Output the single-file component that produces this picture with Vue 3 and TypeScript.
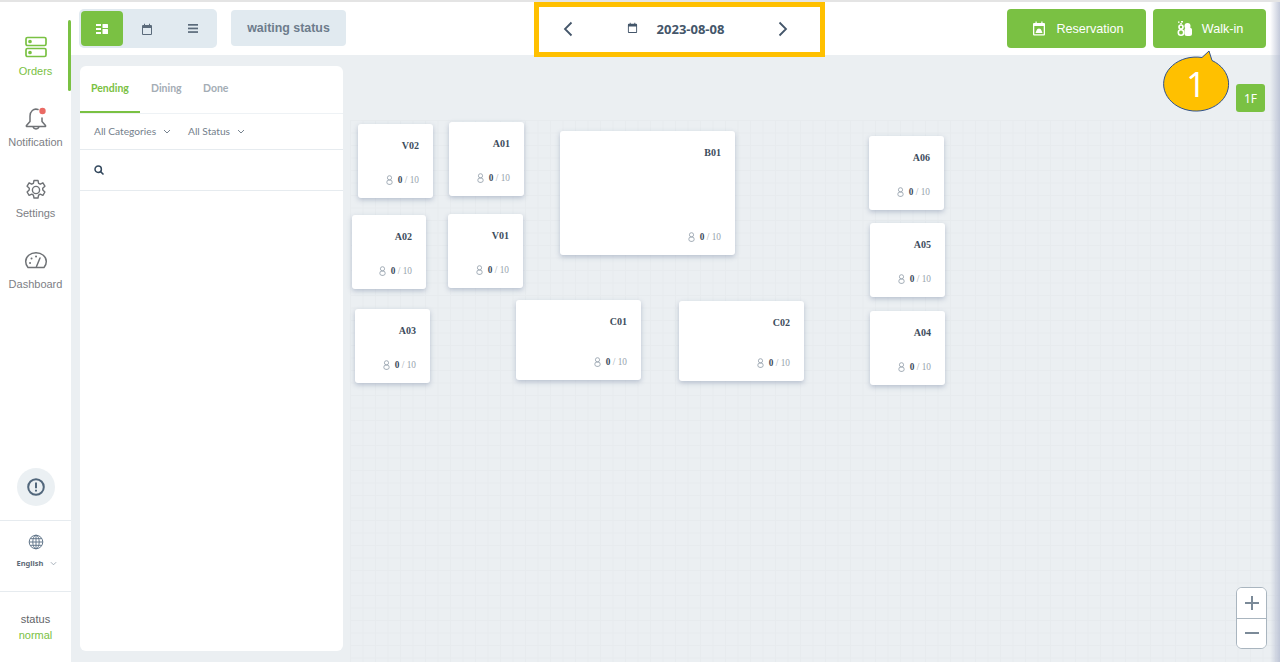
<script setup lang="ts">
interface TableItem { name: string; x: number; y: number; w: number; h: number }
const tables: TableItem[] = [
  { name: 'V02', x: 358, y: 124, w: 75, h: 74 },
  { name: 'A01', x: 449, y: 122, w: 75, h: 74 },
  { name: 'B01', x: 560, y: 131, w: 175, h: 124 },
  { name: 'A06', x: 869, y: 136, w: 75, h: 74 },
  { name: 'A02', x: 352, y: 215, w: 74, h: 74 },
  { name: 'V01', x: 448, y: 214, w: 75, h: 74 },
  { name: 'A05', x: 870, y: 223, w: 75, h: 74 },
  { name: 'A03', x: 355, y: 309, w: 75, h: 74 },
  { name: 'C01', x: 516, y: 300, w: 125, h: 80 },
  { name: 'C02', x: 679, y: 301, w: 125, h: 80 },
  { name: 'A04', x: 870, y: 311, w: 75, h: 74 },
]
function tableBox(t: TableItem) {
  return { left: t.x + 'px', top: t.y + 'px', width: t.w + 'px', height: t.h + 'px' }
}
</script>

<template>
  <div class="page">
    <aside class="side">
      <div class="nav-item active">
        <svg width="24" height="22" viewBox="0 0 24 22" fill="none" stroke="#7ac143" stroke-width="1.7">
          <rect x="2" y="1.5" width="20" height="8" rx="1.5" />
          <rect x="2" y="12.5" width="20" height="8" rx="1.5" />
          <circle cx="6" cy="5.5" r="1" fill="#7ac143" />
          <circle cx="6" cy="16.5" r="1" fill="#7ac143" />
        </svg>
        <span>Orders</span>
        <i class="nav-bar"></i>
      </div>
      <div class="nav-item">
        <svg width="24" height="24" viewBox="0 0 24 24" fill="none" stroke="#6f7276" stroke-width="1.5" stroke-linecap="round" stroke-linejoin="round">
          <path d="M14 2.500C9.500 1 6 4.500 6 9v5.500L2.500 18.500q-.6 1 .7 1h17.600q1.200 0 .7-1L18 14.500V11" />
          <path d="M9 19.800a3.200 3.500 0 0 0 6 0" />
          <circle cx="18.500" cy="4" r="3.200" fill="#ea6a64" stroke="none" />
        </svg>
        <span>Notification</span>
      </div>
      <div class="nav-item">
        <svg width="24" height="24" viewBox="0 0 24 24" fill="none" stroke="#6f7276" stroke-width="1.400" stroke-linejoin="round">
          <circle cx="12" cy="12" r="3.600" />
          <path d="M10 2.500h4l.6 2.900 1.700.8 2.600-1.400 2 3.400-2.200 2 .1 1.800 2.100 2-2 3.400-2.700-1.200-1.600 1-.6 2.800h-4l-.6-2.800-1.600-1-2.700 1.200-2-3.400 2.100-2 .1-1.800-2.200-2 2-3.400 2.600 1.400 1.700-.8z" />
        </svg>
        <span>Settings</span>
      </div>
      <div class="nav-item">
        <svg width="24" height="24" viewBox="0 2 24 24" fill="none" stroke="#6f7276" stroke-width="1.500" stroke-linecap="round" stroke-linejoin="round">
          <path d="M4 20.500Q1.700 18 1.700 14.500a10.300 8.800 0 0 1 20.600 0q0 3.500-2.300 6z" />
          <path d="M12.500 19.500L16 11" />
          <path d="M6 16h.1M7.500 11.500h.1M12 9.500h.1" stroke-width="1.900" />
        </svg>
        <span>Dashboard</span>
      </div>

      <div class="side-bottom">
        <div class="alert-wrap">
          <div class="alert">
            <svg width="20" height="20" viewBox="0 0 20 20" fill="none" stroke="#52677c" stroke-width="2">
              <circle cx="10" cy="10" r="7.800" />
              <path d="M10 5.500v5.700M10 12.800v1.700" />
            </svg>
          </div>
        </div>
        <div class="lang">
          <svg width="16" height="16" viewBox="0 0 16 16" fill="none" stroke="#64788c" stroke-width="1">
            <circle cx="8" cy="8" r="6.800" />
            <ellipse cx="8" cy="8" rx="3.200" ry="6.800" />
            <path d="M8 1.200v13.600M1.200 8h13.600M2.200 4.700h11.600M2.200 11.300h11.600" />
          </svg>
          <div class="lang-row">
            <span>English</span>
            <svg width="7" height="5" viewBox="0 0 8 5" fill="none" stroke="#9aa5b0" stroke-width="1"><path d="M1 1l3 3 3-3" /></svg>
          </div>
        </div>
        <div class="status">
          <span>status</span>
          <span class="normal">normal</span>
        </div>
      </div>
    </aside>

    <main class="main">
      <header class="toolbar">
        <div class="toolbar-left">
          <div class="views">
            <button class="view on">
              <svg width="12" height="10" viewBox="0 0 12 10" fill="#fff">
                <rect x="0" y="0" width="5" height="2" /><rect x="0" y="4" width="5" height="2" /><rect x="0" y="8" width="5" height="2" />
                <rect x="6.500" y="0" width="5.500" height="4" rx=".5" /><rect x="6.500" y="5" width="5.500" height="5" rx=".5" />
              </svg>
            </button>
            <button class="view">
              <svg width="12" height="12" viewBox="0 0 12 12" fill="#5b6b7b">
                <path d="M1 3a1 1 0 0 1 1-1h1V.8h1V2h4V.8h1V2h1a1 1 0 0 1 1 1v8a1 1 0 0 1-1 1H2a1 1 0 0 1-1-1z M2 5v6h8V5z" fill-rule="evenodd" />
              </svg>
            </button>
            <button class="view">
              <svg width="10" height="9" viewBox="0 0 10 9" fill="#5b6b7b"><rect width="10" height="1.700" /><rect y="3.600" width="10" height="1.700" /><rect y="7.200" width="10" height="1.700" /></svg>
            </button>
          </div>
          <div class="waiting">waiting status</div>
        </div>

        <div class="date-nav">
          <svg width="10" height="16" viewBox="0 0 10 16" fill="none" stroke="#44566a" stroke-width="1.800"><path d="M8.500 1.500L2 8l6.500 6.500" /></svg>
          <div class="date">
            <svg width="11" height="11" viewBox="0 0 12 12" fill="#44566a">
              <path d="M1 3a1 1 0 0 1 1-1h1V.8h1V2h4V.8h1V2h1a1 1 0 0 1 1 1v8a1 1 0 0 1-1 1H2a1 1 0 0 1-1-1z M2 5v6h8V5z" fill-rule="evenodd" />
            </svg>
            <span>2023-08-08</span>
          </div>
          <svg width="10" height="16" viewBox="0 0 10 16" fill="none" stroke="#44566a" stroke-width="1.800"><path d="M1.500 1.500L8 8l-6.500 6.500" /></svg>
        </div>

        <div class="actions">
          <button class="action reservation">
            <svg width="14" height="15" viewBox="0 0 14 15" fill="#fff">
              <path d="M1 3a1 1 0 0 1 1-1h1.500V.5h1.200V2h4.600V.5h1.200V2H12a1 1 0 0 1 1 1v10.500a1 1 0 0 1-1 1H2a1 1 0 0 1-1-1z M2.300 5v8.200h9.400V5z" fill-rule="evenodd" />
              <path d="M3.500 12l1-2.500a2.600 2.600 0 0 1 5 0l1 2.500z" />
            </svg>
            Reservation
          </button>
          <button class="action walkin">
            <svg width="15" height="15" viewBox="0 0 15 15">
              <g fill="none" stroke="#fff" stroke-width="1.600">
                <circle cx="4" cy="6" r="2" />
                <circle cx="4" cy="11.500" r="2.700" />
              </g>
              <g fill="#fff">
                <circle cx="10.500" cy="5" r="3" />
                <rect x="7.500" y="6.500" width="7.500" height="8.500" rx="2.500" />
                <rect x="1" y="0.500" width="1.500" height="1.300" />
                <rect x="4" y="0" width="2" height="1.500" />
                <rect x="3" y="2.200" width="2" height="1" />
              </g>
            </svg>
            Walk-in
          </button>
        </div>
      </header>

      <section class="stage">
        <div class="grid"></div>
        <div class="panel">
          <div class="tabs">
            <span class="tab current">Pending</span>
            <span class="tab">Dining</span>
            <span class="tab">Done</span>
          </div>
          <div class="filters">
            <span class="filter">All Categories
              <svg width="8" height="5" viewBox="0 0 8 5" fill="none" stroke="#77838f" stroke-width="1"><path d="M1 1l3 3 3-3" /></svg>
            </span>
            <span class="filter">All Status
              <svg width="8" height="5" viewBox="0 0 8 5" fill="none" stroke="#77838f" stroke-width="1"><path d="M1 1l3 3 3-3" /></svg>
            </span>
          </div>
          <div class="search">
            <svg width="10" height="10" viewBox="0 0 10 10" fill="none" stroke="#34495e" stroke-width="1.500"><circle cx="4.200" cy="4.200" r="3.200" /><path d="M6.600 6.600L9.500 9.500" /></svg>
          </div>
        </div>

        <button class="floor">1F</button>
        <div class="zoom">
          <button class="zoom-btn">
            <svg width="16" height="16" viewBox="0 0 16 16" stroke="#7b8a98" stroke-width="2"><path d="M8 1v14M1 8h14" /></svg>
          </button>
          <button class="zoom-btn">
            <svg width="16" height="16" viewBox="0 0 16 16" stroke="#7b8a98" stroke-width="2"><path d="M1 8h14" /></svg>
          </button>
        </div>
        <div class="edge"></div>
      </section>
    </main>

    <div v-for="t in tables" :key="t.name" class="table" :style="tableBox(t)">
      <div class="table-name">{{ t.name }}</div>
      <div class="seats">
        <svg width="7" height="10" viewBox="0 0 7 10" fill="none" stroke="#9aa5b0" stroke-width=".9">
          <circle cx="3.500" cy="2.800" r="2.100" /><rect x=".8" y="5" width="5.400" height="4.400" rx="2.200" />
        </svg>
        <span><b>0</b> / 10</span>
      </div>
    </div>

    <div class="highlight"></div>
    <div class="callout">
      <svg width="70" height="64" viewBox="0 0 70 64">
        <path d="M39 8.500L46 2L49 11.500A32.500 27 0 1 1 39 8.500z" fill="#ffc000" stroke="#2f528f" stroke-width="1" />
      </svg>
      <span>1</span>
    </div>
  </div>
</template>

<style>
html, body { margin: 0; padding: 0; background: #fff; }
</style>

<style scoped>
.page {
  position: relative;
  display: flex;
  width: 1280px;
  height: 662px;
  overflow: hidden;
  box-sizing: border-box;
  border-top: 2px solid #e4e4e4;
  font-family: "Liberation Sans", Arial, sans-serif;
  background: #fff;
}
button { border: none; padding: 0; font: inherit; cursor: pointer; }

.side {
  width: 71px;
  flex: none;
  display: flex;
  flex-direction: column;
  background: #fff;
}
.nav-item {
  position: relative;
  height: 71px;
  display: flex;
  flex-direction: column;
  align-items: center;
  gap: 5px;
  font-size: 11px;
  line-height: 13px;
  color: #7d8085;
  box-sizing: border-box;
}
.nav-item svg { display: block; }
.nav-item:first-child { margin-top: 34px; height: 72px; gap: 7px; }
.nav-item:nth-child(2) { margin-top: -1px; padding-top: 0; }
.nav-item.active { color: #7ac143; }
.nav-bar {
  position: absolute;
  right: 0;
  top: -16px;
  width: 3px;
  height: 71px;
  background: #7ac143;
  border-radius: 2px;
}
.side-bottom {
  margin-top: auto;
  display: flex;
  flex-direction: column;
}
.alert-wrap { display: flex; justify-content: center; padding-bottom: 14px; }
.alert {
  width: 38px;
  height: 38px;
  border-radius: 50%;
  background: #ebf0f3;
  display: flex;
  align-items: center;
  justify-content: center;
}
.lang {
  height: 72px;
  border-top: 1px solid #e6ebef;
  border-bottom: 1px solid #e6ebef;
  box-sizing: border-box;
  display: flex;
  flex-direction: column;
  align-items: center;
  padding-top: 13px;
  gap: 7px;
}
.lang-row {
  display: flex;
  align-items: center;
  gap: 7px;
  margin-left: 3px;
  font-family: "Noto Sans", sans-serif;
  font-size: 7.500px;
  font-weight: 700;
  line-height: 12px;
  color: #5e6b78;
}
.status {
  height: 70px;
  display: flex;
  flex-direction: column;
  align-items: center;
  padding-top: 19px;
  box-sizing: border-box;
  font-size: 11px;
  line-height: 16px;
  color: #5f6368;
}
.status .normal { color: #7ac143; }

.main {
  flex: 1;
  min-width: 0;
  display: flex;
  flex-direction: column;
}
.toolbar {
  height: 53px;
  flex: none;
  position: relative;
  display: flex;
  align-items: flex-start;
  justify-content: space-between;
  box-sizing: border-box;
  padding: 7px 14px 0 8px;
  background: #fff;
}
.toolbar-left { display: flex; gap: 14px; }
.views {
  width: 138px;
  height: 39px;
  box-sizing: border-box;
  padding: 2px;
  background: #e1eaf0;
  border-radius: 5px;
  display: flex;
}
.view {
  flex: none;
  background: transparent;
  border-radius: 4px;
  display: flex;
  align-items: center;
  justify-content: center;
}
.view.on { width: 42px; margin-right: 2px; background: #7ac143; }
.views .view:nth-child(2) { width: 43px; }
.views .view:nth-child(3) { width: 49px; }
.waiting {
  width: 115px;
  height: 36px;
  margin-top: 1px;
  background: #e1eaf0;
  border-radius: 4px;
  color: #6d7c8c;
  font-family: "Liberation Sans", Arial, sans-serif;
  font-size: 12.400px;
  font-weight: 700;
  line-height: 36px;
  text-align: center;
}
.date-nav {
  position: absolute;
  left: 464px;
  top: 4px;
  width: 282px;
  height: 45px;
  display: flex;
  align-items: center;
  justify-content: space-between;
  box-sizing: border-box;
  padding: 0 29px 0 28px;
}
.date {
  display: flex;
  align-items: center;
  gap: 19px;
  font-family: "Noto Sans", sans-serif;
  font-size: 13px;
  font-weight: 700;
  color: #44566a;
}
.date svg { margin-top: -3px; }
.actions { display: flex; gap: 7px; }
.action {
  height: 39px;
  background: #7ac143;
  color: #fff;
  border-radius: 4px;
  font-size: 12.600px;
  display: flex;
  align-items: center;
  justify-content: center;
  gap: 10px;
  padding-left: 3px;
  box-sizing: border-box;
}
.reservation { width: 139px; }
.walkin { width: 113px; padding-left: 1px; }

.stage {
  position: relative;
  flex: 1;
  min-height: 0;
  background: #ebeff2;
}
.grid {
  position: absolute;
  left: 279px;
  top: 65px;
  right: 0;
  bottom: 0;
  background-image:
    linear-gradient(#e7ebee 1px, transparent 1px),
    linear-gradient(90deg, #e7ebee 1px, transparent 1px);
  background-size: 12.500px 12.500px;
}
.panel {
  position: absolute;
  left: 9px;
  top: 11px;
  width: 263px;
  height: 585px;
  background: #fff;
  border-radius: 6px;
  overflow: hidden;
}
.tabs {
  height: 47px;
  display: flex;
  border-bottom: 1px solid #eef2f5;
  font-family: Lato, "Noto Sans", sans-serif;
  font-size: 10.500px;
  font-weight: 700;
  color: #a4adb5;
}
.tab {
  display: block;
  line-height: 44px;
}
.tab:nth-child(2) { width: 52px; }
.tab.current {
  width: 60px;
  box-sizing: border-box;
  padding-left: 11px;
  margin-right: 11px;
  height: 47px;
  color: #7ac143;
  border-bottom: 2px solid #7ac143;
}
.filters {
  height: 35px;
  display: flex;
  align-items: center;
  gap: 17px;
  padding: 0 0 1px 14px;
  box-sizing: border-box;
  height: 36px;
  border-bottom: 1px solid #e6ebef;
  font-family: Lato, "Noto Sans", sans-serif;
  font-size: 10.200px;
  color: #74808c;
}
.filter { display: inline-flex; align-items: center; gap: 7px; }
.search {
  height: 40px;
  display: flex;
  align-items: center;
  padding-left: 14px;
  border-bottom: 1px solid #e6ebef;
}
.floor {
  position: absolute;
  left: 1165px;
  top: 29px;
  width: 29px;
  height: 28px;
  border-radius: 3px;
  background: #7ac143;
  color: #fff;
  font-family: "Noto Sans", sans-serif;
  font-size: 12px;
}
.zoom {
  position: absolute;
  left: 1165px;
  top: 532px;
  width: 31px;
  height: 62px;
  box-sizing: border-box;
  border: 1px solid #a9b5bf;
  border-radius: 6px;
  background: #fff;
  overflow: hidden;
  display: flex;
  flex-direction: column;
}
.zoom-btn {
  flex: 1;
  background: #fff;
  display: flex;
  align-items: center;
  justify-content: center;
}
.zoom-btn + .zoom-btn { border-top: 1px solid #a9b5bf; }
.edge {
  position: absolute;
  right: 0;
  top: -53px;
  bottom: 0;
  width: 10px;
  background: linear-gradient(90deg, rgba(190, 198, 215, 0), rgba(176, 184, 206, 0.75));
}

.table {
  position: absolute;
  background: #fff;
  border-radius: 3px;
  box-shadow: 0 2px 5px rgba(120, 135, 165, 0.45);
  font-family: "Liberation Serif", serif;
  margin-top: -2px;
}
.table-name {
  position: absolute;
  right: 14px;
  top: 16px;
  font-size: 10px;
  font-weight: 700;
  line-height: 12px;
  color: #3c4c5c;
}
.seats {
  position: absolute;
  right: 14px;
  bottom: 12px;
  display: flex;
  align-items: center;
  gap: 5px;
  font-size: 9.300px;
  line-height: 12px;
  color: #98a3ad;
}
.seats b { color: #3c4c5c; }

.highlight {
  position: absolute;
  left: 534px;
  top: 0;
  width: 291px;
  height: 55px;
  box-sizing: border-box;
  border: 5px solid #ffc000;
  pointer-events: none;
}
.callout {
  position: absolute;
  left: 1163px;
  top: 47px;
  width: 70px;
  height: 64px;
}
.callout svg { display: block; overflow: visible; }
.callout span {
  position: absolute;
  left: 0;
  top: 12px;
  width: 66px;
  text-align: center;
  font-family: "Noto Sans", sans-serif;
  font-size: 34px;
  line-height: 46px;
  color: #fff;
}
</style>
